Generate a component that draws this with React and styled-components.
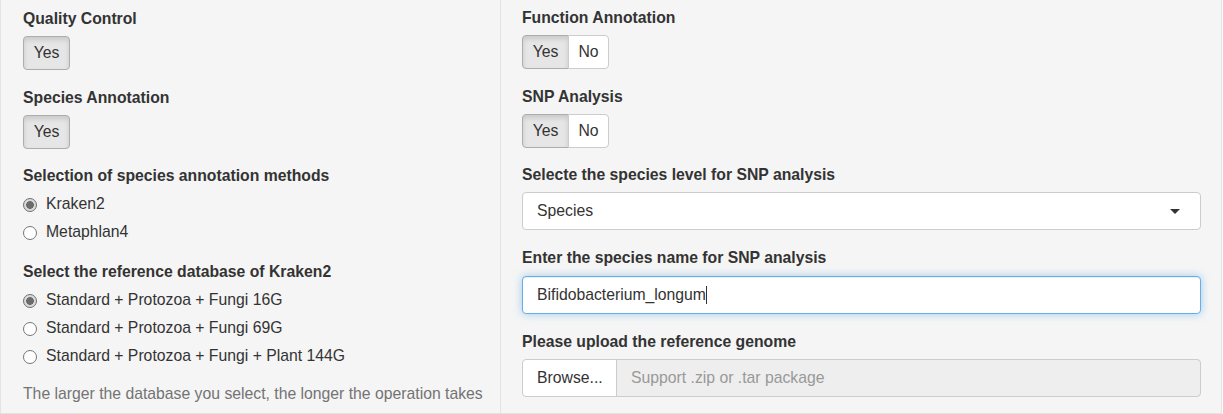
import React from 'react';
import styled, { createGlobalStyle } from 'styled-components';

const Global = createGlobalStyle`
  html, body { margin: 0; padding: 0; background: #fff; }
  body {
    font-family: "Liberation Sans", Arial, Helvetica, sans-serif;
    font-size: 15.75px;
    color: #333;
  }
`;

const Page = styled.div`
  display: flex;
  height: 414px;
  overflow: hidden;
`;

const Well = styled.div`
  box-sizing: border-box;
  width: ${props => props.w}px;
  height: 414px;
  background: #f5f5f5;
  border-right: 1px solid #e3e3e3;
  border-bottom: 1px solid #e3e3e3;
  border-left: ${props => (props.first ? '1px solid #e3e3e3' : 'none')};
  padding: ${props => props.pt}px 20px 0 ${props => props.pl}px;
`;

const Group = styled.div`
  margin-bottom: ${props => (props.mb === undefined ? 17 : props.mb)}px;
`;

const Label = styled.div`
  font-weight: bold;
  line-height: 22px;
  margin-bottom: ${props => (props.mb === undefined ? 6 : props.mb)}px;
`;

const BtnGroup = styled.div`
  display: flex;
`;

const Btn = styled.div`
  box-sizing: border-box;
  height: 34px;
  width: ${props => props.w}px;
  display: flex;
  align-items: center;
  justify-content: center;
  line-height: 20px;
  border: 1px solid ${props => (props.active ? '#adadad' : '#ccc')};
  background: ${props => (props.active ? '#e6e6e6' : '#fff')};
  box-shadow: ${props => (props.active ? 'inset 0 3px 5px rgba(0,0,0,.125)' : 'none')};
  color: #333;
  border-radius: ${props => props.radius || '4px'};
  & + & { margin-left: -1px; }
`;

const Radio = styled.div`
  display: flex;
  align-items: center;
  height: 22px;
  margin-top: 6px;
  line-height: 22px;
`;

const Dot = styled.span`
  box-sizing: border-box;
  width: 14px;
  height: 14px;
  margin: 1px 9px 0 0;
  border-radius: 50%;
  border: 1px solid ${props => (props.on ? '#6f6f6f' : '#767676')};
  background: ${props => (props.on
    ? 'radial-gradient(circle, #6c6c6c 0 3.6px, #d9d9d9 4.1px 100%)'
    : '#fff')};
`;

const Help = styled.div`
  color: #737373;
  line-height: 22px;
  margin-top: 16px;
  white-space: nowrap;
`;

const Select = styled.div`
  box-sizing: border-box;
  height: 38px;
  display: flex;
  align-items: center;
  justify-content: space-between;
  padding: 0 20px 0 14px;
  background: #fff;
  border: 1px solid #ccc;
  border-radius: 4px;
`;

const Caret = styled.span`
  width: 0;
  height: 0;
  border-left: 5px solid transparent;
  border-right: 5px solid transparent;
  border-top: 5px solid #333;
`;

const TextField = styled.div`
  box-sizing: border-box;
  height: 38px;
  display: flex;
  align-items: center;
  padding: 0 14px;
  background: #fff;
  border: 1px solid #66afe9;
  border-radius: 4px;
  box-shadow: inset 0 1px 1px rgba(0,0,0,.075), 0 0 8px rgba(102,175,233,.6);
`;

const TextCaret = styled.span`
  display: inline-block;
  width: 1px;
  height: 18px;
  background: #333;
`;

const FileRow = styled.div`
  display: flex;
  height: 38px;
`;

const Browse = styled.div`
  box-sizing: border-box;
  width: 95px;
  display: flex;
  align-items: center;
  padding-left: 14px;
  background: #fff;
  border: 1px solid #ccc;
  border-radius: 4px 0 0 4px;
`;

const FileName = styled.div`
  box-sizing: border-box;
  flex: 1;
  display: flex;
  align-items: center;
  padding-left: 14px;
  margin-left: -1px;
  background: #eee;
  color: #999;
  border: 1px solid #ccc;
  border-radius: 0 4px 4px 0;
`;

function YesNo() {
  return (
    <BtnGroup>
      <Btn active w={47} radius="4px 0 0 4px">Yes</Btn>
      <Btn w={41} radius="0 4px 4px 0">No</Btn>
    </BtnGroup>
  );
}

function Option(props) {
  return (
    <Radio>
      <Dot on={props.on} />
      {props.children}
    </Radio>
  );
}

export default function App() {
  return (
    <Page>
      <Global />
      <Well w={501} first pt={8} pl={22}>
        <Group>
          <Label>Quality Control</Label>
          <BtnGroup><Btn active w={47}>Yes</Btn></BtnGroup>
        </Group>
        <Group mb={16}>
          <Label>Species Annotation</Label>
          <BtnGroup><Btn active w={47}>Yes</Btn></BtnGroup>
        </Group>
        <Group mb={18}>
          <Label mb={0}>Selection of species annotation methods</Label>
          <Option on>Kraken2</Option>
          <Option>Metaphlan4</Option>
        </Group>
        <Group mb={0}>
          <Label mb={0}>Select the reference database of Kraken2</Label>
          <Option on>Standard + Protozoa + Fungi 16G</Option>
          <Option>Standard + Protozoa + Fungi 69G</Option>
          <Option>Standard + Protozoa + Fungi + Plant 144G</Option>
        </Group>
        <Help>The larger the database you select, the longer the operation takes</Help>
      </Well>
      <Well w={721} pt={7} pl={21}>
        <Group>
          <Label>Function Annotation</Label>
          <YesNo />
        </Group>
        <Group mb={16}>
          <Label>SNP Analysis</Label>
          <YesNo />
        </Group>
        <Group>
          <Label>Selecte the species level for SNP analysis</Label>
          <Select>
            <span>Species</span>
            <Caret />
          </Select>
        </Group>
        <Group>
          <Label mb={7}>Enter the species name for SNP analysis</Label>
          <TextField>
            Bifidobacterium_longum<TextCaret />
          </TextField>
        </Group>
        <Group>
          <Label>Please upload the reference genome</Label>
          <FileRow>
            <Browse>Browse...</Browse>
            <FileName>Support .zip or .tar package</FileName>
          </FileRow>
        </Group>
      </Well>
    </Page>
  );
}
